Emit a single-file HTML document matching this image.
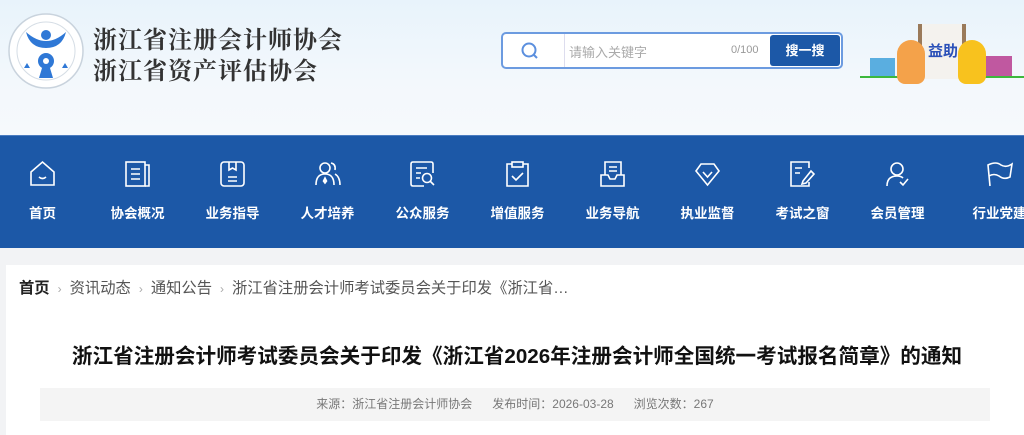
<!DOCTYPE html>
<html><head><meta charset="utf-8"><style>
*{margin:0;padding:0;box-sizing:border-box}
body{width:1024px;height:429px;overflow:hidden;background:#f2f3f5;font-family:"Liberation Sans","Noto Sans CJK SC",sans-serif;position:relative}
.hd{position:absolute;left:0;top:0;width:1024px;height:135px;background:linear-gradient(180deg,#e8f3fb 0%,#f3f8fc 60%,#f6f9fc 100%)}
.t1{position:absolute;left:93px;font-family:"Noto Serif CJK SC",serif;font-weight:700;font-size:24px;color:#333;letter-spacing:1px}
.sb{position:absolute;left:501px;top:32px;width:342px;height:37px;border:2px solid #6c9be0;border-radius:5px;background:#fff}
.nav{position:absolute;left:0;top:135px;width:1024px;height:113px;background:#1c58a7;border-top:1px solid #4b7cc0}
.it{position:absolute;top:0;width:95px;text-align:center;color:#fff}
.it svg{position:absolute;left:34px;top:24px}
.it span{position:absolute;left:0;right:0;top:66px;font-size:13.5px;font-weight:700}
.card{position:absolute;left:6px;top:265px;width:1018px;height:170px;background:#fff}
.bc{position:absolute;left:19px;top:276px;font-size:15.3px;color:#555;white-space:nowrap}
.bc b{color:#222}
.bc i{font-style:normal;color:#aaa;margin:0 8px;font-size:12px}
.ti{position:absolute;left:0;width:1034px;top:339px;text-align:center;font-size:20.6px;font-weight:700;color:#111;white-space:nowrap}
.meta{position:absolute;left:40px;top:388px;width:950px;height:33px;background:#f4f4f4;font-size:12px;color:#777;text-align:center;line-height:33px}
</style></head><body>
<div class="hd">
<svg style="position:absolute;left:7px;top:12px" width="78" height="78" viewBox="0 0 78 78">
<circle cx="39" cy="39" r="37" fill="#fff" stroke="#c9d3dd" stroke-width="1.5"/>
<circle cx="39" cy="39" r="29" fill="none" stroke="#d5dde5" stroke-width="1"/>
<path d="M19 20 Q39 38 59 20 Q55 36 39 36 Q23 36 19 20Z" fill="#2f78d6"/>
<circle cx="39" cy="23" r="5" fill="#2f78d6"/>
<circle cx="39" cy="49" r="8" fill="#2f78d6"/><circle cx="39" cy="49" r="3" fill="#fff"/>
<path d="M35 56 L43 56 L46 66 L32 66Z" fill="#2f78d6"/>
<path d="M17 56 L20 51 L23 56Z M55 56 L58 51 L61 56Z" fill="#2f78d6"/>
</svg>
<div class="t1" style="top:20px">浙江省注册会计师协会</div>
<div class="t1" style="top:51px">浙江省资产评估协会</div>
<div class="sb">
<svg style="position:absolute;left:17px;top:7px" width="20" height="20" viewBox="0 0 20 20"><circle cx="9" cy="9" r="6.5" fill="none" stroke="#5b8fde" stroke-width="2"/><path d="M14 14 L17 17" stroke="#5b8fde" stroke-width="2"/></svg>
<div style="position:absolute;left:61px;top:0;width:1px;height:33px;background:#dde"></div>
<div style="position:absolute;left:66px;top:8px;font-size:13px;color:#aaa">请输入关键字</div>
<div style="position:absolute;left:228px;top:10px;font-size:11px;color:#999">0/100</div>
<div style="position:absolute;right:1px;top:1px;width:70px;height:31px;background:#1c58a7;border-radius:3px;color:#fff;font-size:13px;font-weight:700;text-align:center;line-height:31px">搜一搜</div>
</div>
<div style="position:absolute;left:860px;top:76px;width:164px;height:2px;background:#3cb83c"></div>
<div style="position:absolute;left:870px;top:58px;width:25px;height:18px;background:#5aaee0"></div>
<div style="position:absolute;left:982px;top:56px;width:30px;height:20px;background:#c058a0"></div>
<div style="position:absolute;left:918px;top:24px;width:48px;height:55px;background:#f4f2ee;border-left:4px solid #9a7a5a;border-right:4px solid #9a7a5a"></div>
<div style="position:absolute;left:928px;top:40px;font-size:15px;font-weight:700;color:#2a50b8">益助</div>
<div style="position:absolute;left:897px;top:40px;width:28px;height:44px;background:#f4a24a;border-radius:14px 14px 8px 8px"></div>
<div style="position:absolute;left:958px;top:40px;width:28px;height:44px;background:#f8c21e;border-radius:14px 14px 8px 8px"></div>
</div>
<div class="nav">
<div class="it" style="left:-5px"><svg width="27" height="28" viewBox="0 0 27 28" fill="none" stroke="#fff" stroke-width="1.6"><path d="M2 12 L13.5 2 L25 12 V25 H2Z"/><path d="M10 17 Q13.5 20 17 17"/></svg><span>首页</span></div>
<div class="it" style="left:90px"><svg width="27" height="28" viewBox="0 0 27 28" fill="none" stroke="#fff" stroke-width="1.6"><rect x="2" y="2" width="19" height="24"/><path d="M21 5 H25 V26 H21 M7 9 H16 M7 14 H16 M7 19 H16"/></svg><span>协会概况</span></div>
<div class="it" style="left:185px"><svg width="27" height="28" viewBox="0 0 27 28" fill="none" stroke="#fff" stroke-width="1.6"><rect x="2" y="2" width="23" height="24" rx="3"/><path d="M10 2 V10 L13.5 8 L17 10 V2 M9 17 H18 M9 21 H18"/></svg><span>业务指导</span></div>
<div class="it" style="left:280px"><svg width="27" height="28" viewBox="0 0 27 28" fill="none" stroke="#fff" stroke-width="1.6"><circle cx="11" cy="8" r="5"/><path d="M2 25 Q2 14 11 14 Q20 14 20 25 M17 3 Q22 4 21 10 M21 14 Q26 17 26 25"/><path d="M11 18 L12.5 21 L11 23 L9.5 21Z" fill="#fff"/></svg><span>人才培养</span></div>
<div class="it" style="left:375px"><svg width="27" height="28" viewBox="0 0 27 28" fill="none" stroke="#fff" stroke-width="1.6"><path d="M15 26 H4 Q2 26 2 24 V4 Q2 2 4 2 H22 Q24 2 24 4 V13"/><path d="M7 8 H18 M7 13 H12 M7 18 H11"/><circle cx="18" cy="18" r="4.5"/><path d="M21 21 L25 25"/></svg><span>公众服务</span></div>
<div class="it" style="left:470px"><svg width="27" height="28" viewBox="0 0 27 28" fill="none" stroke="#fff" stroke-width="1.6"><path d="M8 4 H3 V26 H24 V4 H19"/><rect x="8" y="2" width="11" height="5"/><path d="M8 16 L12 20 L19 13"/></svg><span>增值服务</span></div>
<div class="it" style="left:565px"><svg width="27" height="28" viewBox="0 0 27 28" fill="none" stroke="#fff" stroke-width="1.6"><path d="M6 15 V2 H22 V15 M10 7 H18 M10 11 H18"/><path d="M2 15 H9 L11 19 H16 L18 15 H25 V26 H2Z"/></svg><span>业务导航</span></div>
<div class="it" style="left:660px"><svg width="27" height="28" viewBox="0 0 27 28" fill="none" stroke="#fff" stroke-width="1.6"><path d="M7 4 H20 L25 11 L13.5 25 L2 11Z"/><path d="M9 12 L13.5 17 L18 12"/></svg><span>执业监督</span></div>
<div class="it" style="left:755px"><svg width="27" height="28" viewBox="0 0 27 28" fill="none" stroke="#fff" stroke-width="1.6"><path d="M20 8 V2 H2 V26 H20 V22"/><path d="M6 8 H13 M6 13 H11"/><path d="M14 21 L22 11 L25 14 L17 23 L13 24Z"/></svg><span>考试之窗</span></div>
<div class="it" style="left:850px"><svg width="27" height="28" viewBox="0 0 27 28" fill="none" stroke="#fff" stroke-width="1.6"><circle cx="13" cy="9" r="6"/><path d="M3 26 Q3 16 13 16 Q17 16 19 18 M16 22 L19 25 L24 19"/></svg><span>会员管理</span></div>
<div class="it" style="left:952px"><svg width="27" height="28" viewBox="0 0 27 28" fill="none" stroke="#fff" stroke-width="1.6"><path d="M4 26 L2 5 Q10 1 15 5 Q20 8 26 4 L24 17 Q18 20 13 16 Q8 13 3 16"/></svg><span>行业党建</span></div>
</div>
<div class="card"></div>
<div class="bc"><b>首页</b><i>›</i>资讯动态<i>›</i>通知公告<i>›</i>浙江省注册会计师考试委员会关于印发《浙江省…</div>
<div class="ti">浙江省注册会计师考试委员会关于印发《浙江省2026年注册会计师全国统一考试报名简章》的通知</div>
<div class="meta">来源：浙江省注册会计师协会&nbsp;&nbsp;&nbsp;&nbsp;&nbsp;&nbsp;发布时间：2026-03-28&nbsp;&nbsp;&nbsp;&nbsp;&nbsp;&nbsp;浏览次数：267</div>
</body></html>
